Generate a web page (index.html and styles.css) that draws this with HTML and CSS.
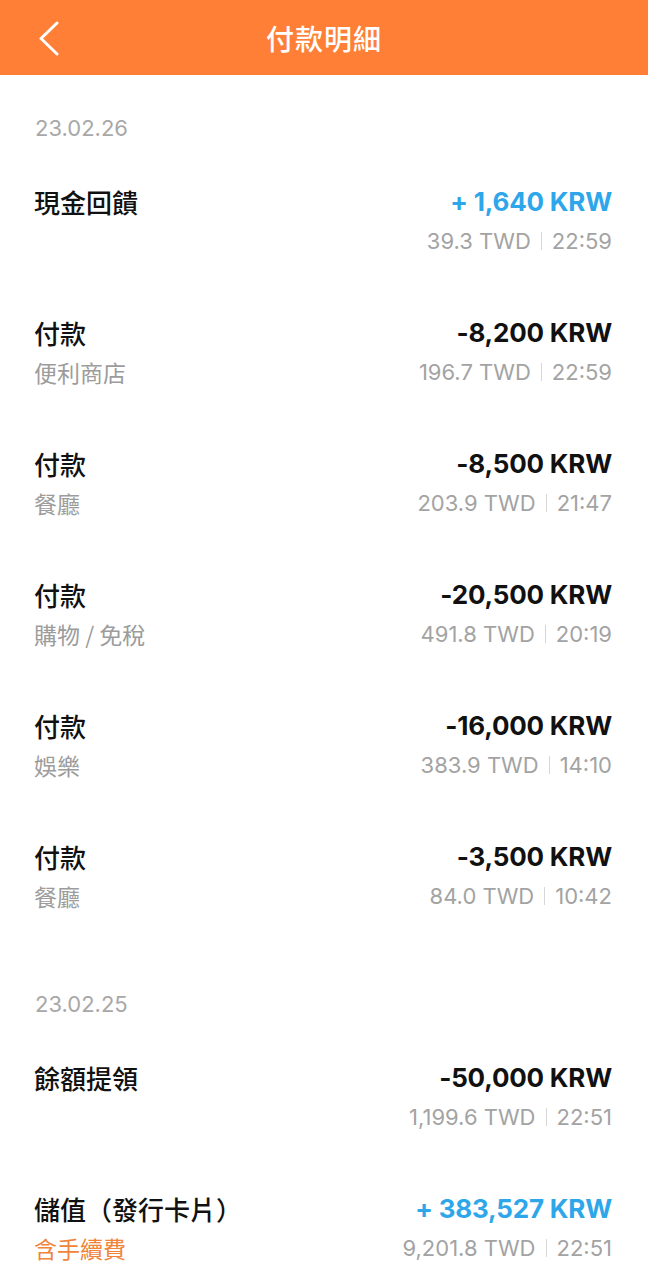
FILE: index.html
```html
<!DOCTYPE html>
<html lang="zh-Hant">
<head>
  <meta charset="UTF-8" />
  <meta name="viewport" content="width=device-width, initial-scale=1.0"/>
  <title>付款明細</title>
  <link rel="stylesheet" href="styles.css">
</head>
<body>

  <div class="header">
    <svg class="back" width="24" height="36" viewBox="0 0 24 36">
      <polyline points="20,2 4,17.5 20,33" fill="none" stroke="#fff" stroke-width="3" stroke-linecap="round" stroke-linejoin="round"/>
    </svg>
    <h1>付款明細</h1>
  </div>

  <div class="list">
    <div class="section">
      <div class="date">23.02.26</div>

      <div class="row">
        <div class="left">
          <div class="title">現金回饋</div>
        </div>
        <div class="right">
          <div class="amount plus">+ 1,640 KRW</div>
          <div class="meta">39.3 TWD<span class="bar"></span>22:59</div>
        </div>
      </div>

      <div class="row">
        <div class="left">
          <div class="title">付款</div>
          <div class="sub">便利商店</div>
        </div>
        <div class="right">
          <div class="amount">-8,200 KRW</div>
          <div class="meta">196.7 TWD<span class="bar"></span>22:59</div>
        </div>
      </div>

      <div class="row">
        <div class="left">
          <div class="title">付款</div>
          <div class="sub">餐廳</div>
        </div>
        <div class="right">
          <div class="amount">-8,500 KRW</div>
          <div class="meta">203.9 TWD<span class="bar"></span>21:47</div>
        </div>
      </div>

      <div class="row">
        <div class="left">
          <div class="title">付款</div>
          <div class="sub">購物 / 免稅</div>
        </div>
        <div class="right">
          <div class="amount">-20,500 KRW</div>
          <div class="meta">491.8 TWD<span class="bar"></span>20:19</div>
        </div>
      </div>

      <div class="row">
        <div class="left">
          <div class="title">付款</div>
          <div class="sub">娛樂</div>
        </div>
        <div class="right">
          <div class="amount">-16,000 KRW</div>
          <div class="meta">383.9 TWD<span class="bar"></span>14:10</div>
        </div>
      </div>

      <div class="row">
        <div class="left">
          <div class="title">付款</div>
          <div class="sub">餐廳</div>
        </div>
        <div class="right">
          <div class="amount">-3,500 KRW</div>
          <div class="meta">84.0 TWD<span class="bar"></span>10:42</div>
        </div>
      </div>
    </div>

    <div class="section">
      <div class="date">23.02.25</div>

      <div class="row">
        <div class="left">
          <div class="title">餘額提領</div>
        </div>
        <div class="right">
          <div class="amount">-50,000 KRW</div>
          <div class="meta">1,199.6 TWD<span class="bar"></span>22:51</div>
        </div>
      </div>

      <div class="row">
        <div class="left">
          <div class="title">儲值（發行卡片）</div>
          <div class="sub fee">含手續費</div>
        </div>
        <div class="right">
          <div class="amount plus">+ 383,527 KRW</div>
          <div class="meta">9,201.8 TWD<span class="bar"></span>22:51</div>
        </div>
      </div>
    </div>
  </div>

</body>
</html>
```

FILE: styles.css
```css
body {
  margin: 0;
  background-color: #fff;
  font-family: Inter, "Noto Sans CJK TC", sans-serif;
  color: #111;
}

.header {
  height: 75px;
  background-color: #ff7f37;
  display: flex;
  align-items: center;
  justify-content: center;
  position: relative;
}

.header h1 {
  margin: 0;
  color: #fff;
  font-family: "Noto Sans CJK TC", sans-serif;
  font-size: 28px;
  font-weight: 500;
  letter-spacing: 1px;
}

.back {
  position: absolute;
  left: 37px;
  top: 21px;
}

.list {
  padding: 19px 36px 0 34px;
}

.section {
  padding-top: 19px;
}

.date {
  height: 30px;
  line-height: 30px;
  font-size: 22px;
  color: #a8a8a8;
  margin-bottom: 41px;
  padding-left: 1px;
}

.row {
  display: flex;
  justify-content: space-between;
  height: 131px;
}

.title {
  height: 36px;
  line-height: 36px;
  font-family: "Noto Sans CJK TC", sans-serif;
  font-size: 26px;
  font-weight: 500;
}

.sub {
  height: 42px;
  line-height: 42px;
  font-family: "Noto Sans CJK TC", sans-serif;
  font-size: 23px;
  color: #9c9c9c;
}

.sub.fee {
  color: #f0843a;
}

.right {
  text-align: right;
}

.amount {
  height: 36px;
  line-height: 36px;
  font-size: 26px;
  font-weight: 700;
  letter-spacing: -0.2px;
}

.amount.plus {
  color: #2ea6ea;
}

.meta {
  height: 42px;
  line-height: 42px;
  font-size: 22px;
  color: #a3a3a3;
  display: flex;
  align-items: center;
  justify-content: flex-end;
}

.bar {
  display: inline-block;
  width: 1px;
  height: 18px;
  background-color: #d6d6d6;
  margin: 0 10px;
}
```
